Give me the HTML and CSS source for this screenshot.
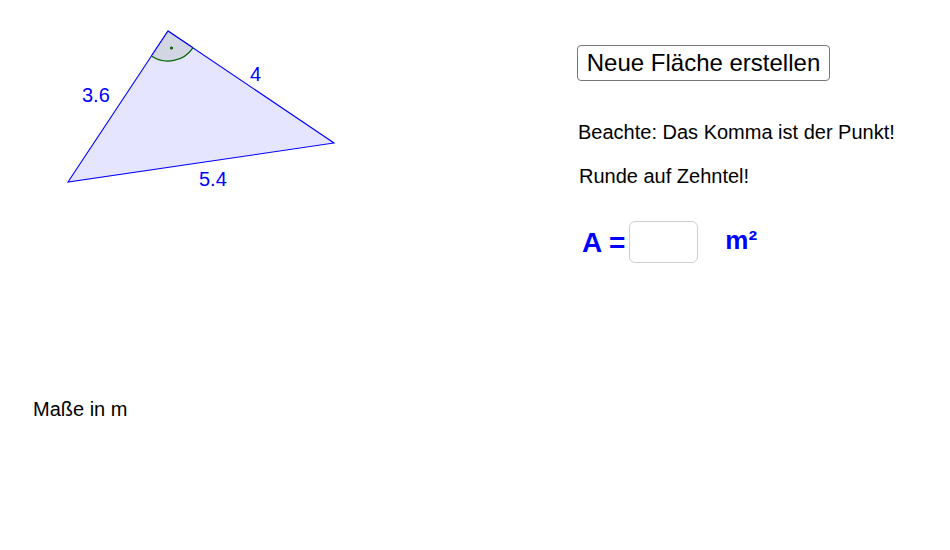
FILE: index.html
```html
<!DOCTYPE html>
<html lang="de">
<head>
<meta charset="utf-8">
<title>Fläche Dreieck</title>
<link rel="stylesheet" href="styles.css">
</head>
<body>
<div class="applet">
  <svg class="drawing" width="950" height="550" viewBox="0 0 950 550">
    <polygon points="168,31 68,182 334,143" fill="#e5e5ff" stroke="#0000ff" stroke-width="1.1"/>
    <path d="M168,31 L151.4,56 A30,30 0 0 0 192.9,47.8 Z" fill="#d2d6e2" stroke="none"/>
    <path d="M151.4,56 A30,30 0 0 0 192.9,47.8" fill="none" stroke="#006400" stroke-width="1.2"/>
    <line x1="168" y1="31" x2="151.4" y2="56" stroke="#0000ff" stroke-width="1.1"/>
    <line x1="168" y1="31" x2="192.9" y2="47.8" stroke="#0000ff" stroke-width="1.1"/>
    <circle cx="171.5" cy="48" r="1.6" fill="#006400"/>
    <text class="label" x="82" y="102">3.6</text>
    <text class="label" x="250" y="81">4</text>
    <text class="label" x="199" y="186">5.4</text>
  </svg>
  <button class="new-btn" type="button">Neue Fläche erstellen</button>
  <p class="note note-comma">Beachte: Das Komma ist der Punkt!</p>
  <p class="note note-round">Runde auf Zehntel!</p>
  <div class="answer">
    <span class="answer-a">A =</span>
    <input class="answer-input" type="text" aria-label="Fläche">
    <span class="answer-unit">m²</span>
  </div>
  <p class="note note-units">Maße in m</p>
</div>
</body>
</html>
```
FILE: styles.css
```css
html, body {
  margin: 0;
  padding: 0;
  background: #ffffff;
}
.applet {
  position: relative;
  width: 950px;
  height: 550px;
  overflow: hidden;
  font-family: "Liberation Sans", Arial, sans-serif;
  color: #000;
}
.drawing {
  position: absolute;
  left: 0;
  top: 0;
}
.label {
  font-family: "Liberation Sans", Arial, sans-serif;
  font-size: 20px;
  fill: #0000ff;
}
.new-btn {
  position: absolute;
  left: 577px;
  top: 45px;
  width: 253px;
  height: 36px;
  margin: 0;
  padding: 0;
  font-family: "Liberation Sans", Arial, sans-serif;
  font-size: 24px;
  line-height: 1;
  color: #000;
  background: #fff;
  border: 1px solid #777;
  border-radius: 4px;
}
.note {
  position: absolute;
  margin: 0;
  font-size: 20px;
  line-height: 20px;
  white-space: nowrap;
}
.note-comma { left: 578px; top: 122px; }
.note-round { left: 579px; top: 166px; }
.note-units { left: 33px; top: 399px; }
.answer {
  position: absolute;
  left: 582px;
  top: 221px;
  display: flex;
  align-items: center;
  height: 42px;
  color: #0000ff;
  font-weight: bold;
}
.answer-a {
  font-size: 28px;
  line-height: 1;
  margin-top: 2px;
}
.answer-input {
  box-sizing: border-box;
  width: 69px;
  height: 42px;
  margin: 0 0 0 4px;
  border: 1px solid #cfcfcf;
  border-radius: 6px;
  background: #fff;
  outline: none;
}
.answer-unit {
  font-size: 26px;
  line-height: 1;
  margin-left: 27px;
  margin-top: -4px;
}
```
